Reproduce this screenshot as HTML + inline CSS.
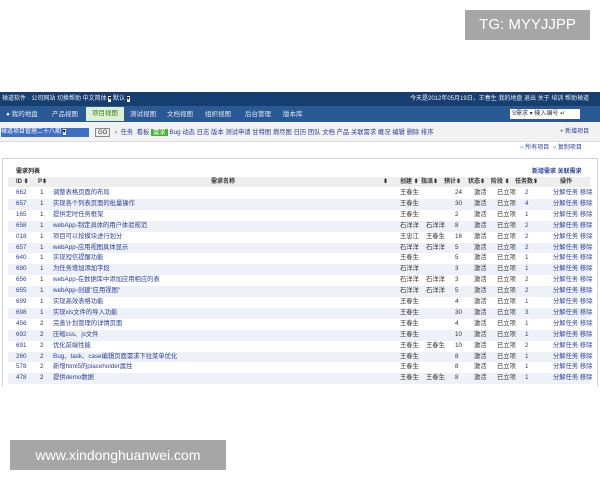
<!DOCTYPE html>
<html><head><meta charset="utf-8"><style>
*{margin:0;padding:0;box-sizing:border-box}
body{width:600px;height:480px;background:#fff;position:relative;overflow:hidden;font-family:"Liberation Sans","Noto Sans CJK SC",sans-serif;font-size:6px;color:#333}
.a{position:absolute;white-space:nowrap}
.lk{color:#2b3f9a}
.row{position:absolute;left:8px;width:582px;height:10.9px;line-height:10.9px;font-size:6.3px}
.row span{position:absolute;white-space:nowrap}
</style></head><body>
<div class="a" style="left:465px;top:10px;width:125px;height:30px;background:#a6a6a6;color:#fff;font-size:15px;line-height:30px;text-align:center">TG: MYYJJPP</div>
<div class="a" style="left:10px;top:440px;width:216px;height:30px;background:#a6a6a6;color:#fff;font-size:14px;line-height:30px;text-align:center">www.xindonghuanwei.com</div>

<div class="a" style="left:0;top:92px;width:600px;height:14px;background:#163e6e;color:#e8eef8;line-height:14px;padding-left:2px">禅道软件 · 公司网站 切换帮助 中文简体 <span style="background:#fff;color:#000">▾</span> 默认 <span style="background:#fff;color:#000">▾</span></div>
<div class="a" style="left:410px;top:92px;color:#e8eef8;line-height:14px">今天是2012年05月19日，王春生 我的地盘 退出 关于 培训 帮助禅道</div>
<div class="a" style="left:0;top:106px;width:600px;height:16px;background:#2a5a93"></div>
<div class="a" style="left:0;top:108px;color:#dfe8f5;line-height:13px;font-size:6.5px">
<span style="position:absolute;left:6px">● 我的地盘</span><span style="position:absolute;left:52px">产品视图</span>
<span style="position:absolute;left:86px;top:-1px;width:38px;height:14px;background:#dff0d0;color:#3a7a2a;text-align:center;line-height:14px">项目视图</span>
<span style="position:absolute;left:130px">测试视图</span><span style="position:absolute;left:167px">文档视图</span><span style="position:absolute;left:205px">组织视图</span><span style="position:absolute;left:245px">后台管理</span><span style="position:absolute;left:283px">版本库</span></div>
<div class="a" style="left:0;top:122px;width:600px;height:20px;background:#f2f2f2;border-bottom:1px solid #ddd"></div>
<div class="a" style="left:510px;top:109px;width:70px;height:10px;background:#fff;color:#333;line-height:10px;padding-left:2px">S需求 ▾ 输入编号 ↵</div>
<div class="a" style="left:1px;top:128px;width:88px;height:9px;background:#3d6fc4;color:#fff;line-height:9px">禅道项目管理二十八期 <span style="background:#fff;color:#000">▾</span></div>
<div class="a" style="left:95px;top:128px;border:1px solid #888;background:#eee;height:9px;line-height:8px;padding:0 2px">GO</div>
<div class="a lk" style="left:115px;top:128px;line-height:9px;font-size:6.3px">› &nbsp;任务 &nbsp;看板 <span style="background:#4caf3a;color:#fff;padding:0 2px">需求</span> Bug 动态 日志 版本 测试申请 甘特图 燃尽图 日历 团队 文档 产品 关联需求 概况 编辑 删除 排序</div>
<div class="a lk" style="left:560px;top:128px;line-height:9px">+ 新增项目</div>
<div class="a lk" style="left:520px;top:144px;line-height:9px">○ 所有项目 &nbsp;○ 复制项目</div>

<div class="a" style="left:2px;top:158px;width:596px;height:228px;border:1px solid #d5d5d5;border-bottom:none"></div>
<div class="a" style="left:16px;top:166px;font-weight:bold;color:#222">需求列表</div>
<div class="a lk" style="left:532px;top:166px;font-weight:bold">新增需求 关联需求</div>
<div class="a" style="left:8px;top:177px;width:582px;height:10px;background:#eeeeee;line-height:10px;font-weight:bold;color:#333">
<span style="position:absolute;left:8px">ID ⬍</span><span style="position:absolute;left:30px">P⬍</span><span style="position:absolute;left:203px">需求名称</span><span style="position:absolute;left:375px">⬍</span><span style="position:absolute;left:392px">创建 ⬍</span><span style="position:absolute;left:413px">指派⬍</span><span style="position:absolute;left:436px">预计⬍</span><span style="position:absolute;left:460px">状态⬍</span><span style="position:absolute;left:483px">阶段 ⬍</span><span style="position:absolute;left:507px">任务数⬍</span><span style="position:absolute;left:552px">操作</span></div>
<div id="rows"></div>
<script>
var d=[["662",1,"调整表格页面的布局","王春生","",24,2],["657",1,"实现各个列表页面的批量操作","王春生","",30,4],["165",1,"提供定时任务框架","王春生","",2,1],["658",1,"webApp-制定具体的用户体验规范","石洋洋","石洋洋",8,2],["018",1,"项目可以按模块进行划分","王忠江","王春生",16,2],["657",1,"webApp-应用视图具体显示","石洋洋","石洋洋",5,2],["640",1,"实现短信提醒功能","王春生","",5,1],["690",1,"为任务增加添加字段","石洋洋","",3,1],["656",1,"webApp-在数据库中添加应用相应的表","石洋洋","石洋洋",3,2],["655",1,"webApp-创建\"应用视图\"","石洋洋","石洋洋",5,2],["699",1,"实现高效表格功能","王春生","",4,1],["698",1,"实现xls文件的导入功能","王春生","",30,3],["456",2,"完善计划管理的详情页面","王春生","",4,1],["692",2,"压缩css、js文件","王春生","",10,1],["691",2,"优化前端性能","王春生","王春生",10,2],["260",2,"Bug、task、case编辑页面需求下拉菜单优化","王春生","",8,1],["578",2,"新增html5的placeholder属性","王春生","",8,1],["478",2,"提供demo数据","王春生","王春生",8,1]];
var h="";for(var i=0;i<d.length;i++){var r=d[i];h+='<div class="row" style="top:'+(188+i*10.9)+'px;background:'+(i%2?'#eef1f7':'#fff')+'"><span class="lk" style="left:8px">'+r[0]+'</span><span style="left:32px">'+r[1]+'</span><span class="lk" style="left:45px">'+r[2]+'</span><span style="left:392px">'+r[3]+'</span><span style="left:418px">'+r[4]+'</span><span style="left:447px">'+r[5]+'</span><span style="left:466px">激活</span><span style="left:489px">已立项</span><span class="lk" style="left:517px">'+r[6]+'</span><span class="lk" style="left:545px">分解任务 移除</span></div>';}
document.getElementById("rows").innerHTML=h;
</script>
</body></html>
